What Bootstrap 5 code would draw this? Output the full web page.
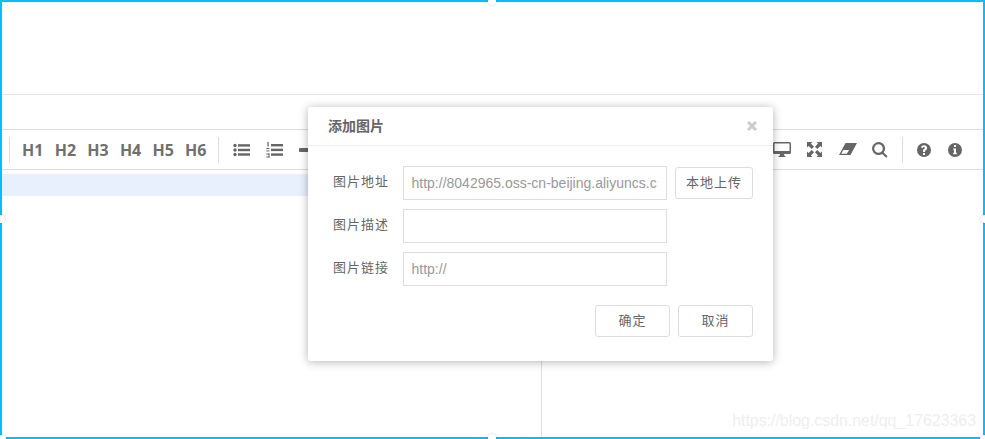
<!DOCTYPE html>
<html lang="zh">
<head>
<meta charset="utf-8">
<title>添加图片</title>
<link rel="stylesheet" href="https://cdn.jsdelivr.net/npm/bootstrap@5.3.0/dist/css/bootstrap.min.css">
<style>
html,body{height:100%;overflow:hidden;background:#fff}
body{font-family:"Liberation Sans","Noto Sans CJK SC",sans-serif;color:#666;font-size:14px}
.frame{width:985px;height:439px;border:2px solid #00bfff;overflow:hidden}
.blank{height:93px;border-bottom:1px solid #e6e6e6}
.gap-row{height:34px}
.tb{height:41px;border-top:1px solid #ddd;border-bottom:1px solid #ddd;padding-left:7px;color:#666}
.sep{width:1px;height:26px;background:#ddd;flex:none}
.hs{margin-left:6.500px;margin-right:6px}
.h{font:700 16px "Noto Sans","Open Sans",sans-serif;color:#707070;width:32.600px;text-align:center;flex:none}
.ic{flex:none;display:block;fill:#666}
.lists{gap:16px;margin:0 15px 0 14px}
.spacer{width:438px;flex:none}
.right-ic{width:32.600px;flex:none;display:flex;justify-content:center}
.sep-r{margin-left:6px;margin-right:5px}
.q{margin-left:-1px}
.i{margin-left:-1.500px}
.panes{height:267px}
.left-pane{width:540px;border-right:1px solid #ddd;padding-top:4px}
.sel{height:22px;background:#e8f0fe}
.handle{position:absolute;width:8px;height:8px;border-radius:50%;background:#fff;box-shadow:0 0 3px rgba(0,0,0,.2)}
.h-t{left:488px;top:-3px}
.h-l{left:-3px;top:215px}
.h-r{left:981px;top:215px}
.h-b{left:488px;top:434px}
.h-bl{left:-2px;top:435px}
.h-br{left:980px;top:435px}
.wm{position:absolute;right:7px;bottom:8px;font-size:15.900px;color:#eeeef0;line-height:1}
.dlg{position:absolute;left:308px;top:107px;width:465px;height:254px;background:#fff;border-radius:3px;box-shadow:0 1px 10px rgba(0,0,0,.3)}
.dlg-h{height:39px;border-bottom:1px solid #eee;padding-left:20px;font-weight:700;font-size:14px;color:#666}
.x{position:absolute;left:439px;top:14px;display:block}
.dlg-b{padding:20px 20px 0 25px}
.lbl{width:70px;flex:none;letter-spacing:1px;font-size:13px;padding-bottom:2px}
.inp{width:264px;height:34px;border:1px solid #ddd;border-radius:0;padding:0 9px 0 7.500px;font-size:14px;color:#666;flex:none;outline:0;font-family:"Liberation Sans",sans-serif}
.inp::placeholder{color:#999}
.bt{height:32px;width:75px;border:1px solid #ddd;border-radius:3px;background:#fff;color:#666;font-size:13px;padding:0;letter-spacing:1px}
.bt.up{width:78px;margin-left:8px}
.rowf{margin-bottom:9px}
.foot{gap:8px;margin-top:19px}
</style>
</head>
<body class="m-0">
<div class="frame position-relative">
  <div class="blank"></div>
  <div class="gap-row"></div>
  <div class="tb d-flex align-items-center">
    <span class="sep"></span>
    <span class="d-flex hs">
      <span class="h">H1</span><span class="h">H2</span><span class="h">H3</span><span class="h">H4</span><span class="h">H5</span><span class="h">H6</span>
    </span>
    <span class="sep"></span>
    <span class="d-flex lists align-items-center">
      <svg class="ic" width="17" height="14" viewBox="0 0 17 14"><circle cx="2" cy="2.500" r="1.700"/><circle cx="2" cy="7" r="1.700"/><circle cx="2" cy="11.500" r="1.700"/><rect x="5" y="1.200" width="12" height="2.400"/><rect x="5" y="5.800" width="12" height="2.400"/><rect x="5" y="10.300" width="12" height="2.400"/></svg>
      <svg class="ic" width="17" height="16" viewBox="0 0 17 16"><rect x="5" y="2" width="12" height="2.400"/><rect x="5" y="6.700" width="12" height="2.400"/><rect x="5" y="11.400" width="12" height="2.400"/><rect x="1.400" y="0" width="1.300" height="4.400"/><rect x=".3" y="6" width="3.200" height="1"/><rect x=".3" y="8.400" width="3.200" height="1"/><rect x=".3" y="11.500" width="3.200" height="1"/><rect x=".3" y="14.500" width="3.200" height="1"/><rect x="2.500" y="11.500" width="1" height="4"/></svg>
      <svg class="ic" width="14" height="4" viewBox="0 0 14 4"><rect width="14" height="4" rx="1"/></svg>
    </span>
    <span class="spacer"></span>
    <span class="d-flex align-items-center">
      <span class="right-ic"><svg class="ic" width="18" height="15" viewBox="0 0 18 15"><path d="M1.500 0h15A1.500 1.500 0 0 1 18 1.500V10.500A1.500 1.500 0 0 1 16.500 12H11l.5 2h1v1H5.500v-1h1l.5-2H1.500A1.500 1.500 0 0 1 0 10.500V1.500A1.500 1.500 0 0 1 1.500 0zM1.500 1.500V9h15V1.500z" fill-rule="evenodd"/></svg></span>
      <span class="right-ic"><svg class="ic" width="15" height="15" viewBox="0 0 15 15"><path d="M0 0h5.500L3.900 1.600 7 4.700 4.700 7 1.600 3.900 0 5.500zM15 0v5.500L13.400 3.900 10.300 7 8 4.700 11.100 1.600 9.500 0zM0 15V9.500L1.600 11.100 4.700 8 7 10.300 3.900 13.400 5.500 15zM15 15H9.500L11.100 13.400 8 10.300 10.300 8 13.400 11.100 15 9.500z"/></svg></span>
      <span class="right-ic"><svg class="ic" width="18" height="13" viewBox="0 0 18 13"><path fill-rule="evenodd" d="M6.500 0H18L11.500 12H0zM2.200 10.800H7.900L10 7H4.300z"/></svg></span>
      <span class="right-ic"><svg class="ic" width="16" height="16" viewBox="0 0 16 16"><path d="M6.500 0a6.500 6.500 0 0 1 5.200 10.400l3.900 3.900-1.500 1.500-3.900-3.900A6.500 6.500 0 1 1 6.500 0zm0 2.200a4.300 4.300 0 1 0 0 8.600 4.300 4.300 0 0 0 0-8.600z" fill-rule="evenodd"/></svg></span>
      <span class="sep sep-r"></span>
      <span class="right-ic q"><svg class="ic" width="14" height="14" viewBox="0 0 14 14"><path fill-rule="evenodd" d="M7 0a7 7 0 1 1 0 14A7 7 0 0 1 7 0zM6 10v2h2v-2zM7 2.300c-1.600 0-2.700.8-3 2.300l1.800.5c.1-.7.500-1 1.100-1 .6 0 1 .3 1 .8 0 .4-.3.700-.9 1.100C6.300 6.500 6 7.100 6 8v1h2v-.7c0-.4.200-.6.800-1C9.600 6.700 10.100 6 10.100 5c0-1.600-1.300-2.700-3.100-2.700z"/></svg></span>
      <span class="right-ic i"><svg class="ic" width="14" height="14" viewBox="0 0 14 14"><path fill-rule="evenodd" d="M7 0a7 7 0 1 1 0 14A7 7 0 0 1 7 0zM6 2v2h2V2zM5.200 5.400v1.400H6v3H5.200v1.500h3.600V9.800H8V5.400z"/></svg></span>
    </span>
  </div>
  <div class="panes d-flex">
    <div class="left-pane"><div class="sel"></div></div>
    <div class="flex-grow-1"></div>
  </div>
  <div class="wm">https://blog.csdn.net/qq_17623363</div>
</div>
<span class="handle h-t"></span>
<span class="handle h-l"></span>
<span class="handle h-r"></span>
<span class="handle h-b"></span>
<span class="handle h-bl"></span>
<span class="handle h-br"></span>
<div class="dlg">
  <div class="dlg-h d-flex align-items-center">添加图片</div>
  <svg class="x" width="10" height="10" viewBox="0 0 10 10"><path d="M1 1l8 8M9 1l-8 8" stroke="#ccc" stroke-width="3"/></svg>
  <div class="dlg-b">
    <div class="d-flex align-items-center rowf"><label class="lbl">图片地址</label><input class="inp" placeholder="http://8042965.oss-cn-beijing.aliyuncs.com/" ><button class="bt up">本地上传</button></div>
    <div class="d-flex align-items-center rowf"><label class="lbl">图片描述</label><input class="inp"></div>
    <div class="d-flex align-items-center rowf"><label class="lbl">图片链接</label><input class="inp" placeholder="http://"></div>
    <div class="d-flex justify-content-end foot"><button class="bt">确定</button><button class="bt">取消</button></div>
  </div>
</div>
<script src="https://cdn.jsdelivr.net/npm/bootstrap@5.3.0/dist/js/bootstrap.bundle.min.js"></script>
</body>
</html>
